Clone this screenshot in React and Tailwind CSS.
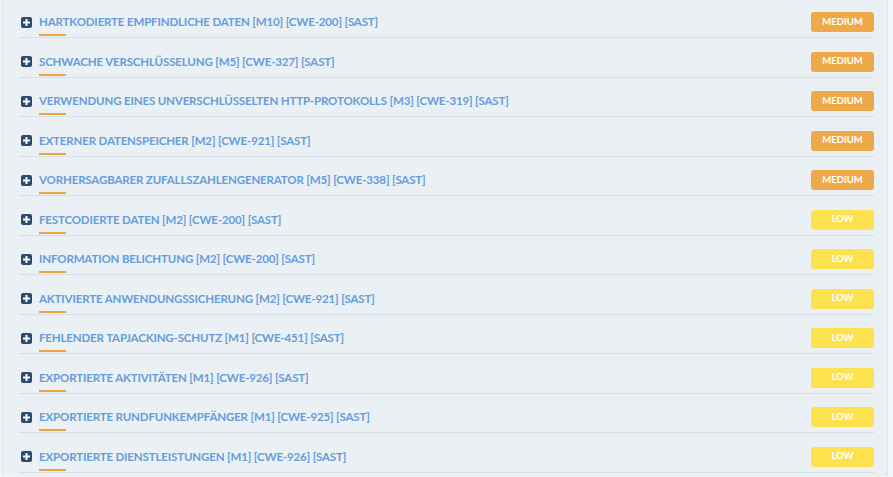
import React from "react";

const items = [
  ["HARTKODIERTE EMPFINDLICHE DATEN [M10] [CWE-200] [SAST]", "MEDIUM"],
  ["SCHWACHE VERSCHLÜSSELUNG [M5] [CWE-327] [SAST]", "MEDIUM"],
  ["VERWENDUNG EINES UNVERSCHLÜSSELTEN HTTP-PROTOKOLLS [M3] [CWE-319] [SAST]", "MEDIUM"],
  ["EXTERNER DATENSPEICHER [M2] [CWE-921] [SAST]", "MEDIUM"],
  ["VORHERSAGBARER ZUFALLSZAHLENGENERATOR [M5] [CWE-338] [SAST]", "MEDIUM"],
  ["FESTCODIERTE DATEN [M2] [CWE-200] [SAST]", "LOW"],
  ["INFORMATION BELICHTUNG [M2] [CWE-200] [SAST]", "LOW"],
  ["AKTIVIERTE ANWENDUNGSSICHERUNG [M2] [CWE-921] [SAST]", "LOW"],
  ["FEHLENDER TAPJACKING-SCHUTZ [M1] [CWE-451] [SAST]", "LOW"],
  ["EXPORTIERTE AKTIVITÄTEN [M1] [CWE-926] [SAST]", "LOW"],
  ["EXPORTIERTE RUNDFUNKEMPFÄNGER [M1] [CWE-925] [SAST]", "LOW"],
  ["EXPORTIERTE DIENSTLEISTUNGEN [M1] [CWE-926] [SAST]", "LOW"],
];

function PlusIcon() {
  return (
    <svg width="11" height="11" viewBox="0 0 11 11" className="shrink-0">
      <rect x="0" y="0" width="11" height="11" rx="2" fill="#2b4c70" />
      <rect x="2" y="4.5" width="7" height="2" fill="#ffffff" />
      <rect x="4.5" y="2" width="2" height="7" fill="#ffffff" />
    </svg>
  );
}

export default function App() {
  return (
    <div
      className="w-[893px] h-[477px] overflow-hidden bg-[#f3f6f9]"
      style={{ fontFamily: "Lato, 'Open Sans', sans-serif" }}
    >
      <div className="ml-[2px] w-[886px] h-full bg-[#ebf0f4] border-l border-r border-[#dde3e8]">
        <div className="ml-[16px] w-[855px] mt-[-1.5px]">
          {items.map(([title, sev], i) => (
            <div
              key={i}
              className="h-[39.5px] border-b border-[#d6dee5] pt-[8.5px] flex items-center justify-between"
            >
              <div className="flex items-center gap-[7px] pl-[2px]">
                <PlusIcon />
                <div className="relative">
                  <span className="block text-[11.5px] leading-[16px] font-bold tracking-[-0.15px] text-[#649ddb] whitespace-nowrap">
                    {title}
                  </span>
                  <div className="absolute left-0 top-[calc(100%+4px)] w-[27px] h-[2px] bg-[#eea43c]" />
                </div>
              </div>
              <div
                className={
                  "w-[63px] h-[20px] rounded-[3px] flex items-center justify-center text-[9.5px] font-bold text-white " +
                  (sev === "MEDIUM" ? "bg-[#eeaa4a]" : "bg-[#fde24f]")
                }
              >
                {sev}
              </div>
            </div>
          ))}
        </div>
      </div>
    </div>
  );
}
